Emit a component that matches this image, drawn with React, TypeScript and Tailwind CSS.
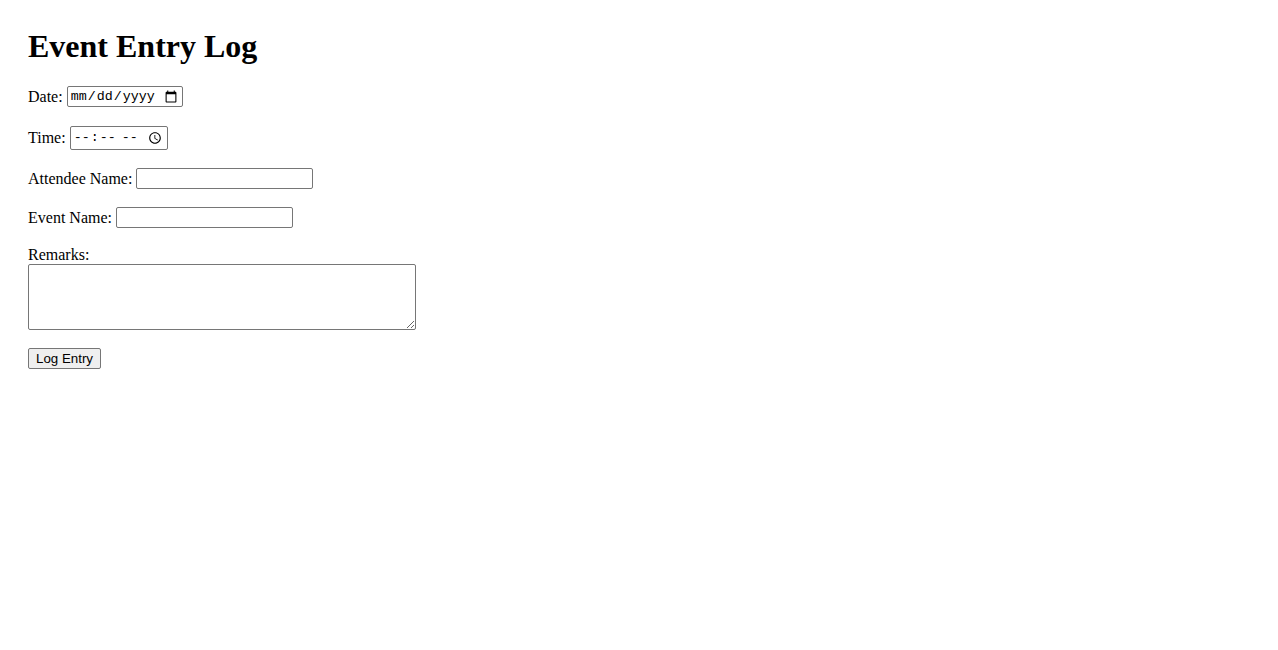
import React from "react";

const inputBase =
  "border border-[#767676] rounded-[2px] bg-white px-[2px] py-[1px] text-[13.33px]";

export default function App() {
  return (
    <div className="min-h-[650px] bg-white text-black px-[28px] pt-[28px] leading-[normal] text-[16px] font-['Liberation_Serif','Times_New_Roman',serif]">
      <h1 className="text-[32px] font-bold mb-[21px] leading-[normal]">Event Entry Log</h1>
      <form onSubmit={(e) => e.preventDefault()} className="flex flex-col items-start">
        <div className="mb-[19px] flex items-center gap-[4px]">
          <label>Date:</label>
          <input
            type="date"
            className={`${inputBase} w-[116px] h-[21px] font-['Liberation_Mono',monospace]`}
          />
        </div>
        <div className="mb-[18px] flex items-center gap-[4px]">
          <label>Time:</label>
          <input
            type="time"
            className={`${inputBase} w-[98px] h-[24px] font-['Liberation_Mono',monospace]`}
          />
        </div>
        <div className="mb-[18px] flex items-center gap-[4px]">
          <label>Attendee Name:</label>
          <input
            type="text"
            className={`${inputBase} w-[177px] h-[21px] font-['Liberation_Sans',Arial,sans-serif]`}
          />
        </div>
        <div className="mb-[18px] flex items-center gap-[4px]">
          <label>Event Name:</label>
          <input
            type="text"
            className={`${inputBase} w-[177px] h-[21px] font-['Liberation_Sans',Arial,sans-serif]`}
          />
        </div>
        <div className="mb-[18px] flex flex-col items-start">
          <label>Remarks:</label>
          <textarea className="border border-[#767676] rounded-[2px] bg-white w-[388px] h-[66px] text-[13.33px] font-['Liberation_Mono',monospace]" />
        </div>
        <button
          type="submit"
          className="border border-[#767676] rounded-[2px] bg-[#efefef] px-[6px] py-[1px] text-[13.33px] h-[21px] w-[73px] font-['Liberation_Sans',Arial,sans-serif]"
        >
          Log Entry
        </button>
      </form>
    </div>
  );
}
